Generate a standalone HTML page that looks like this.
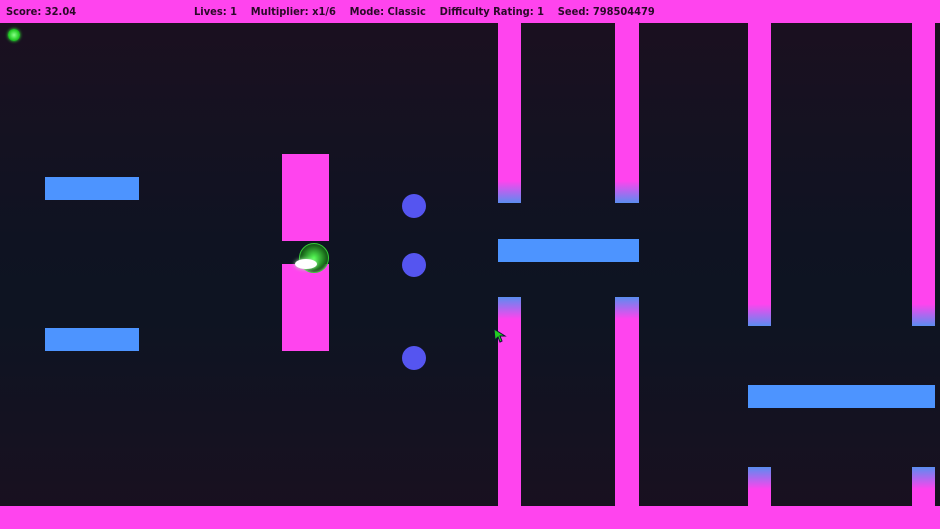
<!DOCTYPE html>
<html><head><style>
body{margin:0;width:940px;height:529px;overflow:hidden;position:relative;background:linear-gradient(#1c1020 0%,#0f1322 45%,#0e1422 60%,#1a1020 100%);font-family:"DejaVu Sans Condensed","Liberation Sans",sans-serif}
.a{position:absolute}
.p{background:#ff44ee}
.b{background:#4d94ff}
.c{position:absolute;width:24px;height:24px;border-radius:50%;background:#5555f0}
.t{background:linear-gradient(#ff44ee 0,#ff44ee calc(100% - 22px),#5a8df0 100%)}
.u{background:linear-gradient(#5a8df0 0,#ff44ee 22px,#ff44ee 100%)}
.hud{position:absolute;top:5px;font-size:11px;font-weight:bold;color:#2a0a28;white-space:pre}
</style></head><body>
<div class="a p" style="left:0;top:0;width:940px;height:23px"></div>
<div class="a p" style="left:0;top:506px;width:940px;height:23px"></div>
<div class="hud" style="left:6px">Score: 32.04</div>
<div class="hud" style="left:194px">Lives: 1    Multiplier: x1/6    Mode: Classic    Difficulty Rating: 1    Seed: 798504479</div>
<div class="a" style="left:8px;top:29px;width:12px;height:12px;border-radius:50%;background:radial-gradient(#8f8 0,#2c2 60%,#174 100%);box-shadow:0 0 3px #3f3"></div>
<div class="a b" style="left:45px;top:177px;width:94px;height:23px"></div>
<div class="a b" style="left:45px;top:328px;width:94px;height:23px"></div>
<div class="a p" style="left:282px;top:154px;width:47px;height:87px"></div>
<div class="a p" style="left:282px;top:264px;width:47px;height:87px"></div>
<div class="a" style="left:299px;top:243px;width:28px;height:28px;border-radius:50%;border:1px solid #3c3;background:radial-gradient(circle at 50% 50%,#5f5 0,#1a6a1a 60%,transparent 100%)"></div>
<div class="a" style="left:295px;top:259px;width:22px;height:10px;border-radius:50%;background:#fff;box-shadow:0 0 4px #afa"></div>
<div class="c" style="left:402px;top:194px"></div>
<div class="c" style="left:402px;top:253px"></div>
<div class="c" style="left:402px;top:346px"></div>
<div class="a t" style="left:498px;top:23px;width:23px;height:180px"></div>
<div class="a u" style="left:498px;top:297px;width:23px;height:209px"></div>
<div class="a t" style="left:615px;top:23px;width:24px;height:180px"></div>
<div class="a u" style="left:615px;top:297px;width:24px;height:209px"></div>
<div class="a b" style="left:498px;top:239px;width:141px;height:23px"></div>
<div class="a t" style="left:748px;top:23px;width:23px;height:303px"></div>
<div class="a u" style="left:748px;top:467px;width:23px;height:39px"></div>
<div class="a t" style="left:912px;top:23px;width:23px;height:303px"></div>
<div class="a u" style="left:912px;top:467px;width:23px;height:39px"></div>
<div class="a b" style="left:748px;top:385px;width:187px;height:23px"></div>
<svg class="a" style="left:493px;top:328px" width="16" height="16"><path d="M1 1 L12 8 L7 8 L9 13 L7 14 L5 9 L2 12 Z" fill="#2c2" stroke="#113" stroke-width="1"/></svg>
</body></html>
